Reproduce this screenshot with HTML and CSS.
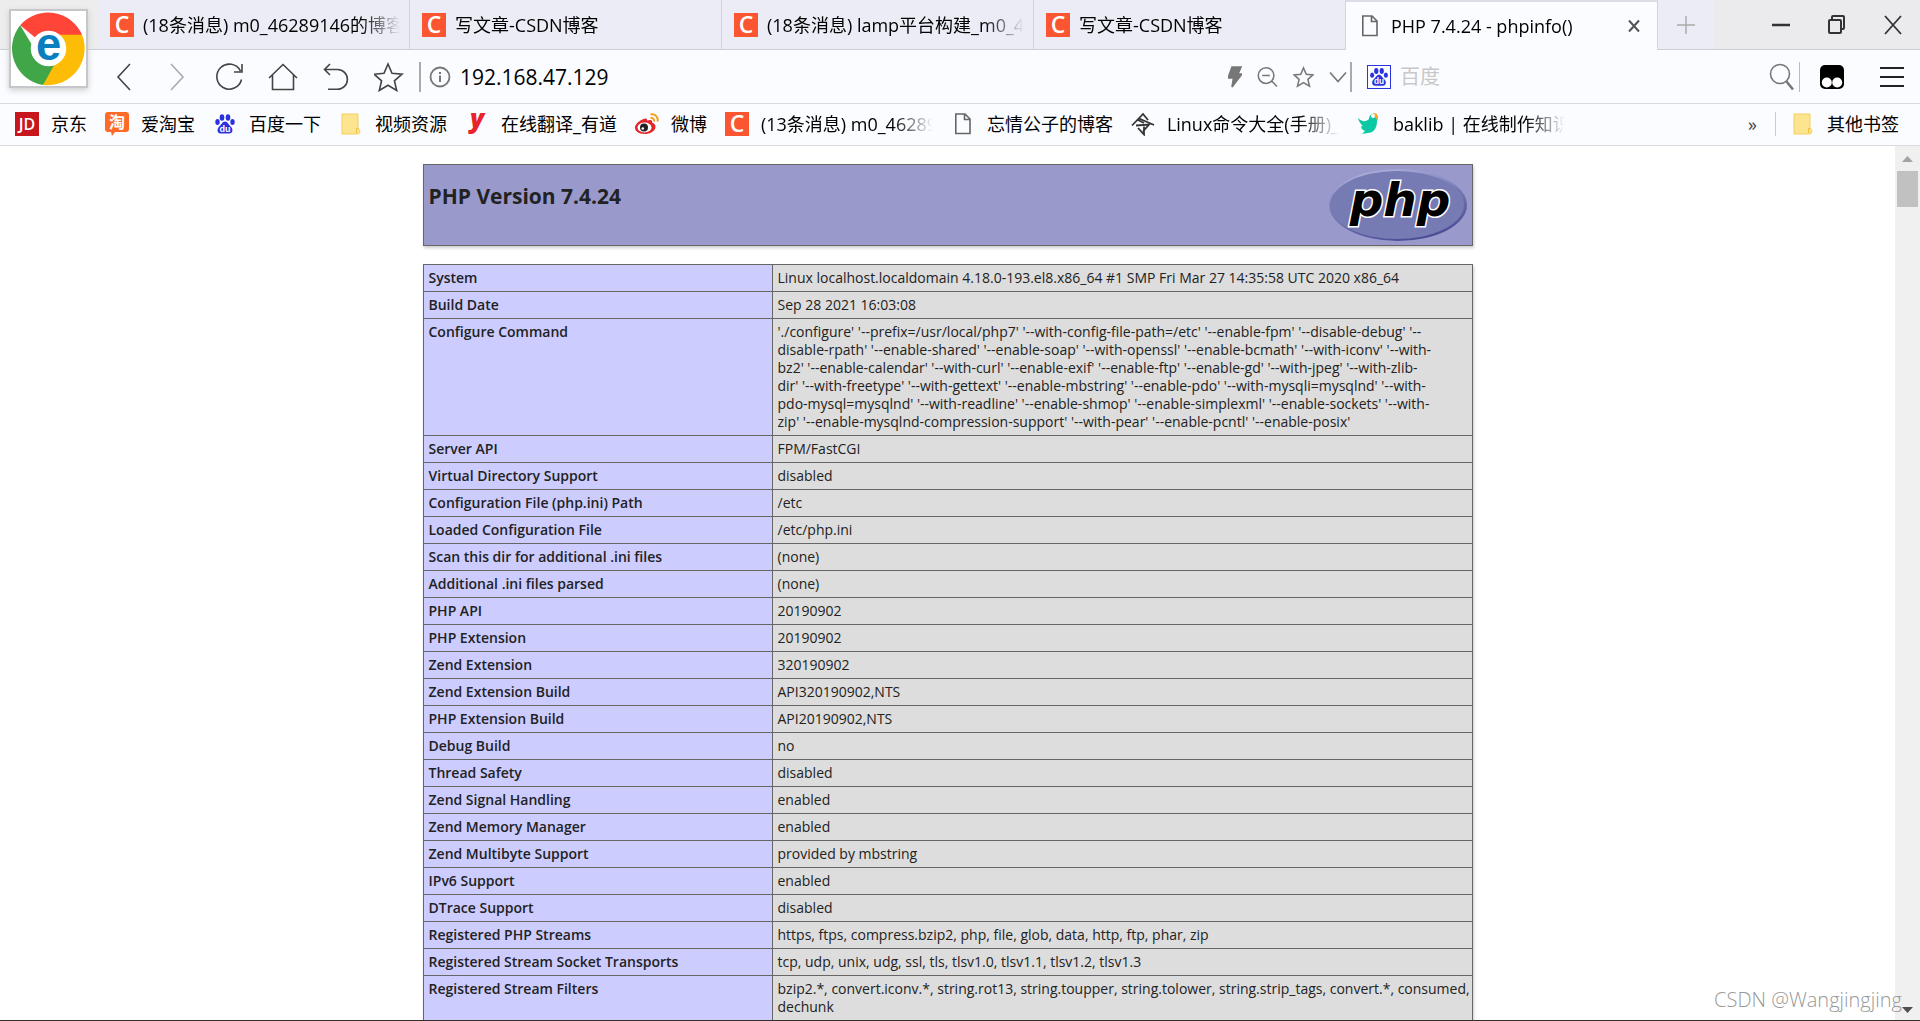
FILE: index.html
```html
<!DOCTYPE html>
<html lang="zh-CN">
<head>
<meta charset="utf-8">
<title>PHP 7.4.24 - phpinfo()</title>
<link rel="stylesheet" href="styles.css">
</head>
<body>
<svg class="defs" aria-hidden="true">
  <symbol id="csdn" viewBox="0 0 24 24"><rect width="24" height="24" fill="#fc5531"/><text x="12" y="20" text-anchor="middle" class="mark-c">C</text></symbol>
  <symbol id="doc" viewBox="0 0 24 24"><path d="M4.800 2h9.200l5 5v14.500H4.800zM13.500 2v5.500H19" fill="none" stroke="#666" stroke-width="1.600"/></symbol>
  <symbol id="folder" viewBox="0 0 24 24"><path d="M3 2h16v14.500c2.500 0 2.500 5.500 0 5.500H3z" fill="#fde48e" stroke="#f3cf5e"/><path d="M17.500 21v-4.500h2" fill="none" stroke="#eebf3c"/></symbol>
  <symbol id="paw" viewBox="0 0 24 24"><g fill="#2a32e0"><ellipse cx="9" cy="5.500" rx="2.300" ry="3.200"/><ellipse cx="15" cy="5.500" rx="2.300" ry="3.200"/><ellipse cx="4.500" cy="10" rx="2.200" ry="2.900"/><ellipse cx="19.500" cy="10" rx="2.200" ry="2.900"/><path d="M12 9.500c2.500 0 3.500 3 5.500 4.700 3 2.500 2.500 7.300-1.200 7.300H7.700c-3.700 0-4.200-4.800-1.200-7.300C8.500 12.500 9.500 9.500 12 9.500z"/></g><text x="12" y="20" text-anchor="middle" class="mark-du">du</text></symbol>
</svg>

<header class="browser">
  <nav class="tabs" aria-label="标签页">
    <a class="tab" href="#"><svg class="ico"><use href="#csdn"/></svg><span class="title">(18条消息) m0_46289146的博客</span></a>
    <a class="tab" href="#"><svg class="ico"><use href="#csdn"/></svg><span class="title">写文章-CSDN博客</span></a>
    <a class="tab" href="#"><svg class="ico"><use href="#csdn"/></svg><span class="title">(18条消息) lamp平台构建_m0_46</span></a>
    <a class="tab" href="#"><svg class="ico"><use href="#csdn"/></svg><span class="title">写文章-CSDN博客</span></a>
    <div class="tab active"><svg class="ico"><use href="#doc"/></svg><span class="title">PHP 7.4.24 - phpinfo()</span>
      <button class="close" aria-label="关闭标签页"><svg width="12" height="14" viewBox="0 0 12 14"><path d="M1 1.500l10 11M11 1.500l-10 11" fill="none" stroke="#555" stroke-width="2"/></svg></button></div>
    <button class="new-tab" aria-label="新标签页"><svg width="18" height="20" viewBox="0 0 18 20"><path d="M9 1v18M0 10h18" fill="none" stroke="#aaa" stroke-width="1.500"/></svg></button>
    <div class="window-controls">
      <button aria-label="最小化"><svg width="20" height="22"><path d="M1 11h18" stroke="#333" stroke-width="2.500"/></svg></button>
      <button aria-label="还原"><svg width="20" height="22" fill="none" stroke="#333" stroke-width="2"><rect x="2" y="6" width="12" height="13" rx="1"/><path d="M5 5V3q0-1 1-1h10q1 0 1 1v11q0 1-1 1h-1"/></svg></button>
      <button aria-label="关闭"><svg width="20" height="22"><path d="M2 2l16 18M18 2L2 20" stroke="#333" stroke-width="1.800"/></svg></button>
    </div>
  </nav>

  <div class="toolbar">
    <div class="nav-buttons">
      <button aria-label="后退"><svg width="30" height="30" viewBox="0 0 30 30"><path d="M21 2L9 15l12 13"/></svg></button>
      <button class="dim" aria-label="前进"><svg width="30" height="30" viewBox="0 0 30 30"><path d="M9 2l12 13L9 28"/></svg></button>
      <button aria-label="刷新"><svg width="30" height="30" viewBox="0 0 30 30"><path d="M26.500 17.500A12.500 12.500 0 1 1 25.500 9M27 2v8h-8"/></svg></button>
      <button aria-label="主页"><svg width="30" height="30" viewBox="0 0 30 30"><path d="M1 16L15 2.500 29 16M4.500 13v14.500h21V13"/></svg></button>
      <button aria-label="撤销"><svg width="30" height="30" viewBox="0 0 30 30"><path d="M9 2L3.500 7.500 9 13M4 7.500h12.500a9.800 9.800 0 0 1 0 19.800H7"/></svg></button>
      <button aria-label="收藏"><svg width="30" height="30" viewBox="1 0 30 30"><path d="M14 2l4 9.300 10 .9-7.600 6.600 2.300 9.700L14 23.300 5.300 28.500l2.300-9.700L0 12.200l10-.9z" transform="translate(1)"/></svg></button>
    </div>
    <div class="address">
      <svg width="22" height="22" viewBox="0 0 22 22" fill="none" stroke="#666"><circle cx="11" cy="11" r="9.500" stroke-width="1.800"/><path d="M11 9.500V16M11 6v2" stroke-width="2"/></svg>
      <input class="url" type="text" aria-label="地址" value="192.168.47.129">
      <button aria-label="极速模式"><svg width="14" height="22" viewBox="0 0 14 22"><path d="M4 1h9l-3 7h4L4 21l1.500-9H0z" fill="#777"/></svg></button>
      <button aria-label="缩小"><svg width="21" height="22" viewBox="0 0 22 22"><circle cx="9.500" cy="9.500" r="8.200"/><path d="M15.500 15.500L21 21M5.500 9.500h8"/></svg></button>
      <button aria-label="收藏本页"><svg width="21" height="22" viewBox="0 0 22 22"><path d="M11 1.500l2.900 6.700 7.100.6-5.400 4.700 1.700 7L11 16.800l-6.300 3.700 1.700-7L1 8.800l7.100-.6z"/></svg></button>
      <button aria-label="展开"><svg width="18" height="22" viewBox="0 0 18 22"><path d="M1 6.500l8 9 8-9"/></svg></button>
    </div>
    <div class="search">
      <svg class="engine"><use href="#paw"/></svg>
      <input type="search" aria-label="搜索" placeholder="百度">
      <button aria-label="搜索"><svg width="26" height="30" viewBox="0 0 26 30"><circle cx="11" cy="12" r="9.500"/><path d="M17.500 19.500l6.500 8" stroke-width="2.500"/></svg></button>
    </div>
    <div class="extras">
      <button aria-label="扩展"><svg width="24" height="24" viewBox="0 0 24 24"><rect width="24" height="24" rx="5"/><circle cx="6.800" cy="17.500" r="5" fill="#fff"/><circle cx="17.200" cy="17.500" r="5" fill="#fff"/></svg></button>
      <button aria-label="菜单"><svg width="24" height="24" viewBox="0 0 24 24"><path d="M0 3h24M0 12h24M0 21h24" stroke="#222" stroke-width="2"/></svg></button>
    </div>
  </div>

  <nav class="bookmarks" aria-label="书签">
    <a href="#"><svg class="ico"><rect width="24" height="24" fill="#c8161e"/><text x="12" y="18" text-anchor="middle" class="mark-jd">JD</text></svg><span>京东</span></a>
    <a href="#"><svg class="ico"><path d="M3 0h18q3 0 3 3v14q0 3-3 3H10l-3 4-1-4H3q-3 0-3-3V3q0-3 3-3z" fill="#ff6a28"/><text x="12" y="16" text-anchor="middle" class="mark-tao">淘</text></svg><span>爱淘宝</span></a>
    <a href="#"><svg class="ico"><use href="#paw"/></svg><span>百度一下</span></a>
    <a href="#"><svg class="ico"><use href="#folder"/></svg><span>视频资源</span></a>
    <a href="#"><svg class="ico"><text x="12" y="16" text-anchor="middle" class="mark-y">y</text></svg><span>在线翻译_有道</span></a>
    <a href="#"><svg class="ico"><path d="M8.500 7c2-1 4-1 3.500 1.500 3-1 6-1 5 2 7 2.500 3 11.500-7 11.500C3 22 0 19 0 15.500 0 12 4.500 8.500 8.500 7z" fill="#e32529"/><ellipse cx="9.500" cy="15.500" rx="7" ry="5" fill="#fff"/><circle cx="9" cy="15.500" r="4" fill="#222"/><circle cx="7.800" cy="16.500" r="1.300" fill="#fff"/><path d="M15.500 2.500c5-1 8 3 7 7M15.500 6c2.500-.5 4 1.500 3.500 3.500" fill="none" stroke="#f9a01b" stroke-width="2"/></svg><span>微博</span></a>
    <a href="#"><svg class="ico"><use href="#csdn"/></svg><span>(13条消息) m0_46289146</span></a>
    <a href="#"><svg class="ico"><use href="#doc"/></svg><span>忘情公子的博客</span></a>
    <a href="#"><svg class="ico" fill="none" stroke="#333" stroke-width="1.800"><path d="M1 13.500L12 2l5 6M7 8l6 3M8 6.500L23 13M5 13.500l13-1-6 7M7 16l6 6.500v-8"/></svg><span>Linux命令大全(手册)_</span></a>
    <a href="#"><svg class="ico"><path d="M1 6c4 4 8 4 11 1 0-4 3-6 6-5 3 .8 3.500 4 2 7 0 8-4 12-9 12l-6 1 3-3c-3-1-4-3-4-5l2 .5C3 11 1.500 9 1 6z" fill="#0cc9a5"/><path d="M16 1.500c4-1.500 6 2 3.500 6z" fill="#ffa51f"/><circle cx="16" cy="4" r="2" fill="#fff"/></svg><span>baklib | 在线制作知识库</span></a>
    <button class="more" aria-label="更多书签">»</button>
    <a class="other" href="#"><svg class="ico"><use href="#folder"/></svg><span>其他书签</span></a>
  </nav>

  <svg class="brand" viewBox="0 0 76 76" role="img" aria-label="浏览器"><rect width="76" height="76" fill="#fff"/>
    <path d="M38 38L9.300 14.500A37.500 37.500 0 0 1 72 24z" fill="#ff4438"/>
    <path d="M38 38V24h34a37.500 37.500 0 0 1-39 51z" fill="#fdbc06"/>
    <path d="M38 38l5 18-10.500 19A37.500 37.500 0 0 1 9.300 14.500L21 34z" fill="#40a648"/>
    <circle cx="38" cy="38" r="18" fill="#fff"/><text x="38" y="50" text-anchor="middle" class="mark-e">e</text></svg>
</header>

<main class="viewport">
  <div class="page">
    <div class="center">
      <div class="banner">
        <h1>PHP Version 7.4.24</h1>
        <svg class="php" viewBox="0 0 138 72" role="img" aria-label="PHP logo">
          <defs><linearGradient id="rim" x1="0.300" y1="0" x2="0.700" y2="1"><stop offset="0" stop-color="#aeb2dc"/><stop offset=".45" stop-color="#777bb3"/><stop offset="1" stop-color="#484893"/></linearGradient></defs>
          <ellipse cx="69" cy="36" rx="69" ry="36" fill="url(#rim)"/><ellipse cx="68" cy="36" rx="67" ry="34" fill="#777bb3"/>
          <text x="71" y="47" text-anchor="middle" class="mark-php">php</text>
        </svg>
      </div>
      <table>
        <tbody>
        <tr><th scope="row">System</th><td>Linux localhost.localdomain 4.18.0-193.el8.x86_64 #1 SMP Fri Mar 27 14:35:58 UTC 2020 x86_64</td></tr>
        <tr><th scope="row">Build Date</th><td>Sep 28 2021 16:03:08</td></tr>
        <tr><th scope="row">Configure Command</th><td>'./configure' '--prefix=/usr/local/php7' '--with-config-file-path=/etc' '--enable-fpm' '--disable-debug' '--<br>disable-rpath' '--enable-shared' '--enable-soap' '--with-openssl' '--enable-bcmath' '--with-iconv' '--with-<br>bz2' '--enable-calendar' '--with-curl' '--enable-exif' '--enable-ftp' '--enable-gd' '--with-jpeg' '--with-zlib-<br>dir' '--with-freetype' '--with-gettext' '--enable-mbstring' '--enable-pdo' '--with-mysqli=mysqlnd' '--with-<br>pdo-mysql=mysqlnd' '--with-readline' '--enable-shmop' '--enable-simplexml' '--enable-sockets' '--with-<br>zip' '--enable-mysqlnd-compression-support' '--with-pear' '--enable-pcntl' '--enable-posix'</td></tr>
        <tr><th scope="row">Server API</th><td>FPM/FastCGI</td></tr>
        <tr><th scope="row">Virtual Directory Support</th><td>disabled</td></tr>
        <tr><th scope="row">Configuration File (php.ini) Path</th><td>/etc</td></tr>
        <tr><th scope="row">Loaded Configuration File</th><td>/etc/php.ini</td></tr>
        <tr><th scope="row">Scan this dir for additional .ini files</th><td>(none)</td></tr>
        <tr><th scope="row">Additional .ini files parsed</th><td>(none)</td></tr>
        <tr><th scope="row">PHP API</th><td>20190902</td></tr>
        <tr><th scope="row">PHP Extension</th><td>20190902</td></tr>
        <tr><th scope="row">Zend Extension</th><td>320190902</td></tr>
        <tr><th scope="row">Zend Extension Build</th><td>API320190902,NTS</td></tr>
        <tr><th scope="row">PHP Extension Build</th><td>API20190902,NTS</td></tr>
        <tr><th scope="row">Debug Build</th><td>no</td></tr>
        <tr><th scope="row">Thread Safety</th><td>disabled</td></tr>
        <tr><th scope="row">Zend Signal Handling</th><td>enabled</td></tr>
        <tr><th scope="row">Zend Memory Manager</th><td>enabled</td></tr>
        <tr><th scope="row">Zend Multibyte Support</th><td>provided by mbstring</td></tr>
        <tr><th scope="row">IPv6 Support</th><td>enabled</td></tr>
        <tr><th scope="row">DTrace Support</th><td>disabled</td></tr>
        <tr><th scope="row">Registered PHP Streams</th><td>https, ftps, compress.bzip2, php, file, glob, data, http, ftp, phar, zip</td></tr>
        <tr><th scope="row">Registered Stream Socket Transports</th><td>tcp, udp, unix, udg, ssl, tls, tlsv1.0, tlsv1.1, tlsv1.2, tlsv1.3</td></tr>
        <tr><th scope="row">Registered Stream Filters</th><td>bzip2.*, convert.iconv.*, string.rot13, string.toupper, string.tolower, string.strip_tags, convert.*, consumed,<br>dechunk</td></tr>
        </tbody>
      </table>
    </div>
  </div>
  <div class="scrollbar" aria-hidden="true">
    <svg width="11" height="6"><path d="M0 6l5.500-6L11 6z" fill="#a3a3a3"/></svg>
    <div class="thumb"></div>
    <svg class="down" width="11" height="6"><path d="M0 0l5.500 6L11 0z" fill="#505050"/></svg>
  </div>
  <div class="watermark">CSDN @Wangjingjing</div>
</main>
</body>
</html>
```
FILE: styles.css
```css
* { box-sizing: border-box; }

body {
  margin: 0;
  height: 100vh;
  display: flex;
  flex-direction: column;
  overflow: hidden;
  background: #fff;
  border-bottom: 1px solid #332f2f;
  font: 18px/24px "Open Sans", "Noto Sans CJK SC", sans-serif;
  color: #000;
}

button {
  display: flex;
  align-items: center;
  justify-content: center;
  padding: 0;
  border: 0;
  background: none;
  font: inherit;
  color: inherit;
}

input {
  min-width: 0;
  padding: 0;
  border: 0;
  outline: 0;
  background: none;
  font: inherit;
  color: inherit;
}

a { color: inherit; text-decoration: none; }
svg { flex: none; }

.defs { display: none; }
.ico { width: 24px; height: 24px; }

.mark-c { font: 600 23px "Open Sans", sans-serif; fill: #fff; }
.mark-du { font: bold 9px "Liberation Sans", sans-serif; fill: #fff; }
.mark-jd { font: 600 16px "Open Sans", sans-serif; fill: #fff; }
.mark-tao { font: bold 16px "Noto Sans CJK SC", sans-serif; fill: #fff; }
.mark-y { font: italic 800 26px "Open Sans", sans-serif; fill: #e8232b; }
.mark-e { font: bold 46px "Liberation Sans", sans-serif; fill: #0a7fc0; }
.mark-php {
  font: italic bold 47px "DejaVu Sans", sans-serif;
  fill: #000;
  stroke: #fff;
  stroke-width: 3px;
  paint-order: stroke;
}

.browser { position: relative; flex: none; background: #fbfcff; }

.brand {
  position: absolute;
  left: 9px;
  top: 9px;
  width: 79px;
  height: 79px;
  border: 2px solid #c6c7cb;
  box-shadow: 0 2px 6px #ccc;
}

/* tab strip */
.tabs {
  display: flex;
  height: 50px;
  padding-left: 98px;
  background: linear-gradient(90deg, #ededee 98px, #ebecf5 98px);
  box-shadow: inset 0 -1px #cdced4;
}
.tab {
  display: flex;
  align-items: center;
  flex: 0 1 312px;
  min-width: 0;
  padding: 0 9px 0 12px;
  gap: 9px;
  border-right: 1px solid #d3d4dc;
}
.title {
  flex: 1;
  overflow: hidden;
  white-space: nowrap;
  mask-image: linear-gradient(90deg, #000 calc(100% - 40px), transparent);
}
.tab.active {
  background: #fbfcff;
  border-top: 2px solid #dcdde5;
}
.close { width: 28px; height: 28px; }
.new-tab { width: 56px; }
.window-controls {
  flex: 1;
  display: flex;
  justify-content: flex-end;
  gap: 16px;
  padding-right: 7px;
  background: #ebebed;
  border-bottom: 1px solid #cdced4;
}
.window-controls button { width: 40px; }

/* address row */
.toolbar {
  display: flex;
  align-items: center;
  height: 54px;
  padding-left: 98px;
  border-bottom: 1px solid #d9dadd;
}
.toolbar svg { fill: none; stroke: #777; stroke-width: 1.600px; }
.nav-buttons { display: flex; gap: 1px; }
.nav-buttons button { width: 52px; height: 40px; }
.nav-buttons svg { stroke: #444; }
.nav-buttons .dim svg { stroke: #aaa; }
.address {
  flex: 1;
  display: flex;
  align-items: center;
  gap: 15px;
  height: 30px;
  margin-left: 4px;
  padding: 0 3px 0 8px;
  border-left: 2px solid #aaa;
  border-right: 2px solid #aaa;
}
.url { flex: 1; margin-left: -6px; font-size: 21px; }
.search {
  display: flex;
  align-items: center;
  flex: 0 1 448px;
  height: 30px;
  gap: 9px;
  padding: 0 4px 0 15px;
  border-right: 1px solid #bbb;
}
.search input { flex: 1; font-size: 20px; }
.search input::placeholder { color: #c8c8c8; opacity: 1; }
.toolbar .engine { width: 24px; height: 24px; border: 1px solid #2a32e0; stroke: none; }
.extras { display: flex; gap: 36px; padding: 0 16px 0 20px; }
.extras svg { fill: #000; }
.extras button:first-child svg { stroke: none; }

/* bookmarks row */
.bookmarks {
  display: flex;
  align-items: center;
  gap: 18px;
  height: 42px;
  padding: 0 21px 2px 15px;
  border-bottom: 1px solid #d9dadd;
}
.bookmarks a { display: flex; align-items: center; gap: 12px; }
.bookmarks span {
  max-width: 172px;
  overflow: hidden;
  white-space: nowrap;
}
.bookmarks a:nth-child(7) span,
.bookmarks a:nth-child(9) span,
.bookmarks a:nth-child(10) span {
  width: 172px;
  mask-image: linear-gradient(90deg, #000 calc(100% - 40px), transparent);
}
.more { margin-left: auto; color: #444; }
.bookmarks .other { padding-left: 15px; border-left: 1px solid #ccc; }

/* document */
.viewport {
  position: relative;
  flex: 1;
  min-height: 0;
  display: flex;
}
.page { flex: 1; overflow: hidden; color: #222; }
.center { width: 1050px; max-width: 100%; margin: 18px auto; }
.banner {
  display: flex;
  justify-content: space-between;
  align-items: flex-start;
  margin-bottom: 18px;
  padding: 4px 5px;
  background: #99c;
  border: 1px solid #666;
  box-shadow: 1px 2px 3px #ccc;
}
h1 { margin: 12px 0 0; font-size: 21px; line-height: 30px; font-weight: 700; }
.php { width: 138px; height: 72px; }
table {
  width: 100%;
  table-layout: fixed;
  border-collapse: collapse;
  box-shadow: 1px 2px 3px #ccc;
  font-size: 14px;
  line-height: 18px;
}
th, td {
  padding: 4px 0 4px 5px;
  border: 1px solid #666;
  vertical-align: top;
  text-align: left;
}
th { width: 349px; background: #ccf; font-weight: 600; }
td { background: #ddd; overflow-wrap: break-word; }

.scrollbar {
  flex: none;
  display: flex;
  flex-direction: column;
  align-items: center;
  gap: 9px;
  width: 25px;
  padding: 10px 0 7px;
  background: #f0f0f0;
}
.thumb { width: 21px; height: 36px; background: #c1c1c1; }
.down { margin-top: auto; }
.watermark {
  position: absolute;
  right: 18px;
  bottom: 8px;
  font: 300 20px/24px "Open Sans", sans-serif;
  color: #999;
}
```
